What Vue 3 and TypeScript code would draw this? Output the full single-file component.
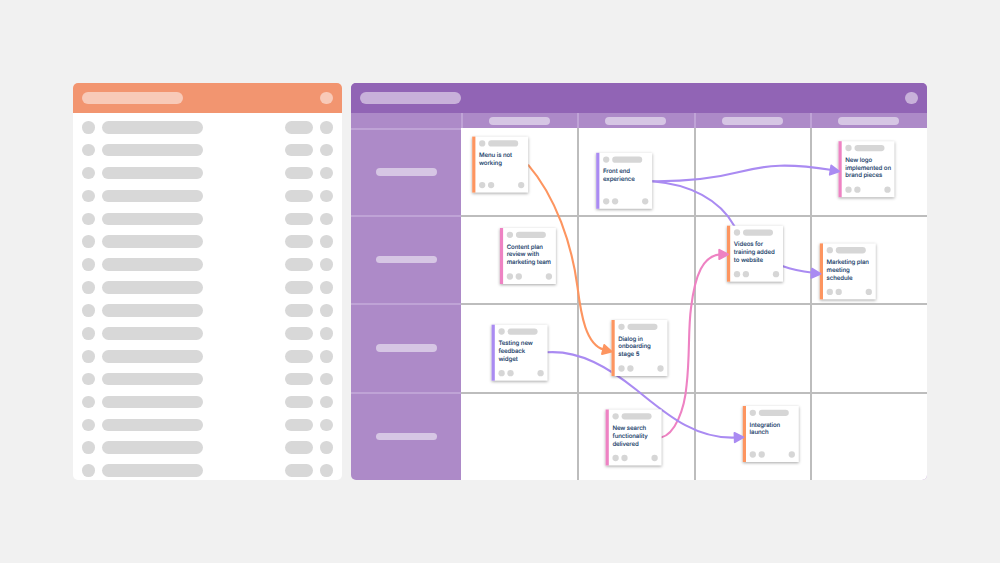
<script setup lang="ts">
import { ref } from 'vue';

type Tone = 'orange' | 'purple' | 'pink';

interface Card {
	id: string;
	x: number;
	y: number;
	tone: Tone;
	lines: string[];
}

interface Link {
	id: string;
	tone: Tone;
	d: string;
	// arrow tip: x, y and angle in degrees
	tip: [number, number, number];
}

const listRows = 16;
const columns = 4;
const rows = 4;

const cards = ref<Card[]>([
	{ id: 'menu', x: 472.2, y: 136.6, tone: 'orange', lines: ['Menu is not', 'working'] },
	{ id: 'front', x: 596.2, y: 152.8, tone: 'purple', lines: ['Front end', 'experience'] },
	{ id: 'logo', x: 838.5, y: 141.2, tone: 'pink', lines: ['New logo', 'implemented on', 'brand pieces'] },
	{ id: 'content', x: 499.9, y: 228, tone: 'pink', lines: ['Content plan', 'review with', 'marketing team'] },
	{ id: 'videos', x: 727, y: 225.7, tone: 'orange', lines: ['Videos for', 'training added', 'to website'] },
	{ id: 'marketing', x: 819.8, y: 243.4, tone: 'orange', lines: ['Marketing plan', 'meeting', 'schedule'] },
	{ id: 'testing', x: 491.6, y: 324.7, tone: 'purple', lines: ['Testing new', 'feedback', 'widget'] },
	{ id: 'dialog', x: 611.5, y: 320, tone: 'orange', lines: ['Dialog in', 'onboarding', 'stage 5'] },
	{ id: 'search', x: 605.6, y: 409.5, tone: 'pink', lines: ['New search', 'functionality', 'delivered'] },
	{ id: 'integration', x: 742.8, y: 406, tone: 'orange', lines: ['Integration', 'launch'] },
]);

const links: Link[] = [
	{
		id: 'menu-dialog',
		tone: 'orange',
		d: 'M528 164.6 C556 197 572 245 577.5 287 C581 315 586 345 604 349.6',
		tip: [612.6, 351.9, 14],
	},
	{
		id: 'front-logo',
		tone: 'purple',
		d: 'M652 181.2 C680 181.5 708 180 738 172.3 S788 163.2 832 170',
		tip: [840.2, 171.6, 9],
	},
	{
		id: 'front-marketing',
		tone: 'purple',
		d: 'M652 181.2 C690 184 720 200 734 225.5 C745 246 760 261 783 266.2 C792 269.5 803 271.5 813 272.8',
		tip: [821.4, 273.9, 4],
	},
	{
		id: 'search-videos',
		tone: 'pink',
		d: 'M661 437.6 C675 434 684.5 410 686.6 385 C690 355 688 330 691 308 C695 275 703 255 721 254.4',
		tip: [729, 254.4, 0],
	},
	{
		id: 'testing-integration',
		tone: 'purple',
		d: 'M547 352.3 C580 350 609 368 636 389.5 S694 440 737 437.5',
		tip: [744.4, 437.2, -2],
	},
];

const lineHeight = 7.85;
</script>

<template>
	<main class="page">
		<section class="panel list">
			<header class="panel-head">
				<span class="pill title"></span>
				<span class="dot"></span>
			</header>
			<ul class="list-body">
				<li v-for="n in listRows" :key="n" class="list-row">
					<span class="dot"></span>
					<span class="pill title"></span>
					<span class="pill tag"></span>
					<span class="dot"></span>
				</li>
			</ul>
		</section>

		<section class="panel board">
			<header class="panel-head">
				<span class="pill title"></span>
				<span class="dot"></span>
			</header>
			<div class="grid">
				<div class="corner"></div>
				<div v-for="c in columns" :key="`h${c}`" class="col-head">
					<span class="label"></span>
				</div>
				<template v-for="r in rows" :key="`r${r}`">
					<div class="row-head"><span class="label"></span></div>
					<div
						v-for="c in columns"
						:key="c"
						class="cell"
						:class="{ 'first-col': c === 1, 'first-row': r === 1 }"></div>
				</template>
			</div>
		</section>

		<svg class="canvas" viewBox="0 0 1000 563">
			<path v-for="link in links" :key="link.id" class="link" :class="link.tone" :d="link.d" />

			<g
				v-for="card in cards"
				:key="card.id"
				:class="card.tone"
				:transform="`translate(${card.x} ${card.y})`">
				<rect class="paper" width="56" height="56" />
				<rect class="edge" width="3.2" height="56" />
				<circle class="mini" cx="10" cy="6.8" r="3.15" />
				<rect class="mini" x="16" y="3.7" width="30" height="6.3" rx="3.15" />
				<text
					v-for="(line, i) in card.lines"
					:key="line"
					class="card-text"
					x="6.8"
					:y="20.6 + i * lineHeight">{{ line }}</text>
				<circle class="mini" cx="10" cy="48.5" r="3.15" />
				<circle class="mini" cx="18.9" cy="48.5" r="3.15" />
				<circle class="mini" cx="49" cy="48.5" r="3.15" />
			</g>

			<path
				v-for="link in links"
				:key="`${link.id}-arrow`"
				class="arrow"
				:class="link.tone"
				d="M-9.8 -4.7 L-0.9 0 L-9.8 4.7 Z"
				:transform="`translate(${link.tip[0]} ${link.tip[1]}) rotate(${link.tip[2]})`" />
		</svg>
	</main>
</template>

<style>
body {
	background: #f1f1f1;
}
</style>

<style scoped>
.page {
	position: relative;
	box-sizing: border-box;
	width: 1000px;
	height: 563px;
	padding: 83px 73px 0;
	display: flex;
	align-items: flex-start;
	gap: 9px;
	overflow: hidden;
	background: #f1f1f1;
	font-family: Inter, 'Open Sans', sans-serif;
}

.panel {
	height: 397.4px;
	border-radius: 5px;
	overflow: hidden;
	display: flex;
	flex-direction: column;
}
.list {
	width: 269px;
	background: #fff;
}
.board {
	width: 576px;
	background: #ad8ac8;
}
.panel-head {
	flex: none;
	box-sizing: border-box;
	height: 30px;
	padding: 0 9px;
	display: flex;
	align-items: center;
	justify-content: space-between;
}
.list .panel-head {
	background: #f29570;
}
.board .panel-head {
	background: #9164b5;
}

.pill {
	height: 12.6px;
	border-radius: 7px;
	background: #d8d8d8;
}
.title {
	width: 101px;
}
.tag {
	width: 28px;
	margin-left: auto;
}
.dot {
	width: 12.8px;
	height: 12.6px;
	border-radius: 50%;
	background: #d8d8d8;
}
.list .panel-head span {
	background: #f8cab8;
}
.board .panel-head span {
	background: #c8b1da;
}

.list-body {
	margin: 0;
	padding: 8px 9px 0;
	list-style: none;
	display: flex;
	flex-direction: column;
	gap: 10.3px;
}
.list-row {
	display: flex;
	align-items: center;
	gap: 7.2px;
}

.grid {
	flex: 1;
	display: grid;
	grid-template-columns: 110px 116px 117px 116px 117px;
	grid-template-rows: 15px 87px 88px 89px 1fr;
}
.col-head {
	display: flex;
	align-items: center;
	justify-content: center;
	padding: 1px 2px 0 0;
	border-left: 2px solid #bfa3d6;
}
.row-head {
	display: flex;
	align-items: center;
	justify-content: center;
	padding-bottom: 1px;
	border-top: 2px solid #bfa3d6;
}
.label {
	width: 61px;
	height: 7.6px;
	border-radius: 4px;
	background: #d6c6e4;
}
.cell {
	background: #fff;
	border-top: 2px solid #bdbdbd;
	border-left: 2px solid #bdbdbd;
}
.cell.first-col {
	border-left: none;
}
.cell.first-row {
	border-top: none;
}

/* cards and connectors lie over the grid */
.canvas {
	position: absolute;
	inset: 0;
	width: 1000px;
	height: 563px;
}

.orange {
	--tone: #fd9560;
}
.purple {
	--tone: #aa8bf2;
}
.pink {
	--tone: #ee82c3;
}
.link {
	fill: none;
	stroke: var(--tone);
	stroke-width: 2.1;
}
.arrow {
	fill: var(--tone);
	stroke: var(--tone);
	stroke-width: 1.8;
	stroke-linejoin: round;
}
.paper {
	fill: #fff;
	filter: drop-shadow(0 1px 1.8px rgba(0, 0, 0, 0.35));
}
.edge {
	fill: var(--tone);
}
.mini {
	fill: #d6d6d6;
}
.card-text {
	font-size: 6.1px;
	font-weight: 500;
	letter-spacing: -0.08px;
	fill: #1d3f6b;
	stroke: #1d3f6b;
	stroke-width: 0.08;
	text-rendering: geometricPrecision;
}
</style>
